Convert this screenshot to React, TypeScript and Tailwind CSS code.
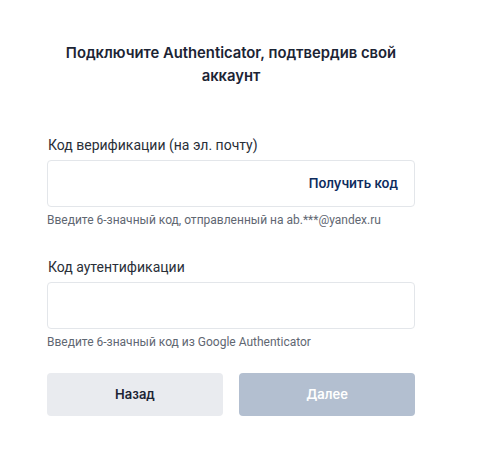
export default function App() {
  return (
    <div className="min-h-[466px] w-[482px] bg-white font-['Roboto',sans-serif]">
      <div className="ml-[47px] w-[368px] pt-[42px]">
        <h1 className="px-4 text-center font-['Inter',sans-serif] text-[14.8px] font-semibold leading-[23px] text-[#1c2434]">
          Подключите Authenticator, подтвердив свой аккаунт
        </h1>

        <div className="mt-[47px]">
          <label className="block pl-px text-[14px] leading-[20px] text-[#2a2f38]">
            Код верификации (на эл. почту)
          </label>
          <div className="mt-[5px] flex h-[47px] items-center justify-end rounded-[4px] border border-[#e3e6ea] pr-[16px]">
            <span className="font-['Inter',sans-serif] text-[13px] font-semibold text-[#0d2c5e]">
              Получить код
            </span>
          </div>
          <p className="mt-[6px] text-[12px] leading-[14px] text-[#5f6772]">
            Введите 6-значный код, отправленный на ab.***@yandex.ru
          </p>
        </div>

        <div className="mt-[30px]">
          <label className="block pl-px text-[14px] leading-[20px] text-[#2a2f38]">
            Код аутентификации
          </label>
          <div className="mt-[5px] h-[47px] rounded-[4px] border border-[#e3e6ea]"></div>
          <p className="mt-[6px] text-[12px] leading-[14px] text-[#5f6772]">
            Введите 6-значный код из Google Authenticator
          </p>
        </div>

        <div className="mt-[24px] flex gap-4">
          <button className="h-[43px] flex-1 rounded-[4px] bg-[#e9ebef] font-['Inter',sans-serif] text-[13px] font-semibold text-[#1c2434]">
            Назад
          </button>
          <button className="h-[43px] flex-1 rounded-[4px] bg-[#b3bfd0] font-['Inter',sans-serif] text-[13px] font-semibold text-white">
            Далее
          </button>
        </div>
      </div>
    </div>
  );
}
